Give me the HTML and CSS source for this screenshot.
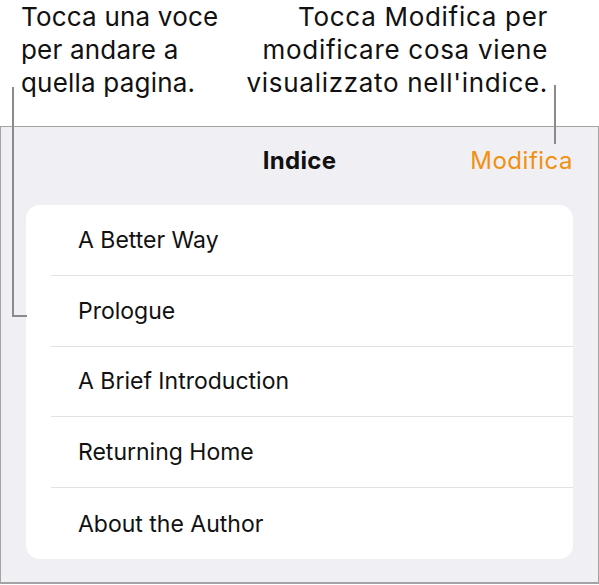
FILE: index.html
```html
<!DOCTYPE html>
<html lang="it">
<head>
    <meta charset="UTF-8">
    <meta name="viewport" content="width=device-width, initial-scale=1.0">
    <title>Indice</title>
    <link rel="stylesheet" href="styles.css">
</head>
<body>
    <div class="page">
        <div class="callouts">
            <p class="callout callout-left">Tocca una voce<br>per andare a<br>quella pagina.</p>
            <p class="callout callout-right">Tocca Modifica per<br>modificare cosa viene<br>visualizzato nell'indice.</p>
        </div>

        <div class="screen">
            <div class="nav-bar">
                <span class="nav-title">Indice</span>
                <span class="nav-action">Modifica</span>
            </div>
            <ul class="toc-list">
                <li class="toc-item">A Better Way</li>
                <li class="toc-item">Prologue</li>
                <li class="toc-item">A Brief Introduction</li>
                <li class="toc-item">Returning Home</li>
                <li class="toc-item">About the Author</li>
            </ul>
        </div>

        <!-- leader lines from the captions to the controls -->
        <span class="leader leader-left"></span>
        <span class="leader leader-right"></span>
    </div>
</body>
</html>
```

FILE: styles.css
```css
body {
    margin: 0;
    font-family: Inter, "Noto Sans", sans-serif;
    color: #111;
    background-color: #fff;
}
.page {
    position: relative;
    width: 599px;
    height: 585px;
}
.callouts {
    display: flex;
    justify-content: space-between;
    padding: 0 51px 0 21px;
    height: 126px;
}
.callout {
    margin: 0;
    font-size: 26px;
    line-height: 33px;
    letter-spacing: 0.2px;
}
.callout-right {
    text-align: right;
    letter-spacing: 0.7px;
}
.screen {
    box-sizing: border-box;
    width: 599px;
    height: 458px;
    border: 1px solid #a3a3a6;
    border-bottom-width: 2px;
    background-color: #f0eff4;
    padding: 0 25px 0 25px;
}
.nav-bar {
    display: flex;
    align-items: center;
    justify-content: flex-end;
    position: relative;
    height: 66px;
    margin-bottom: 12px;
}
.nav-title {
    position: absolute;
    left: 0;
    right: 0;
    text-align: center;
    font-size: 24px;
    font-weight: 700;
    letter-spacing: 0.3px;
}
.nav-action {
    position: relative;
    font-size: 24px;
    letter-spacing: 0.5px;
    color: #f2900f;
}
.toc-list {
    list-style: none;
    margin: 0;
    padding: 0 0 0 25px;
    background-color: #fff;
    border-radius: 14px;
}
.toc-item {
    display: flex;
    align-items: center;
    height: 70.8px;
    box-sizing: border-box;
    padding-left: 27px;
    font-size: 23px;
    border-bottom: 1px solid #e2e2e6;
}
.toc-item:last-child {
    border-bottom: none;
}
.leader {
    position: absolute;
    border-color: #8a8a8c;
    border-style: solid;
    border-width: 0;
}
.leader-left {
    left: 12px;
    top: 87px;
    width: 13px;
    height: 228px;
    border-left-width: 2px;
    border-bottom-width: 2px;
}
.leader-right {
    left: 554px;
    top: 85px;
    height: 59px;
    border-left-width: 2px;
}
```
